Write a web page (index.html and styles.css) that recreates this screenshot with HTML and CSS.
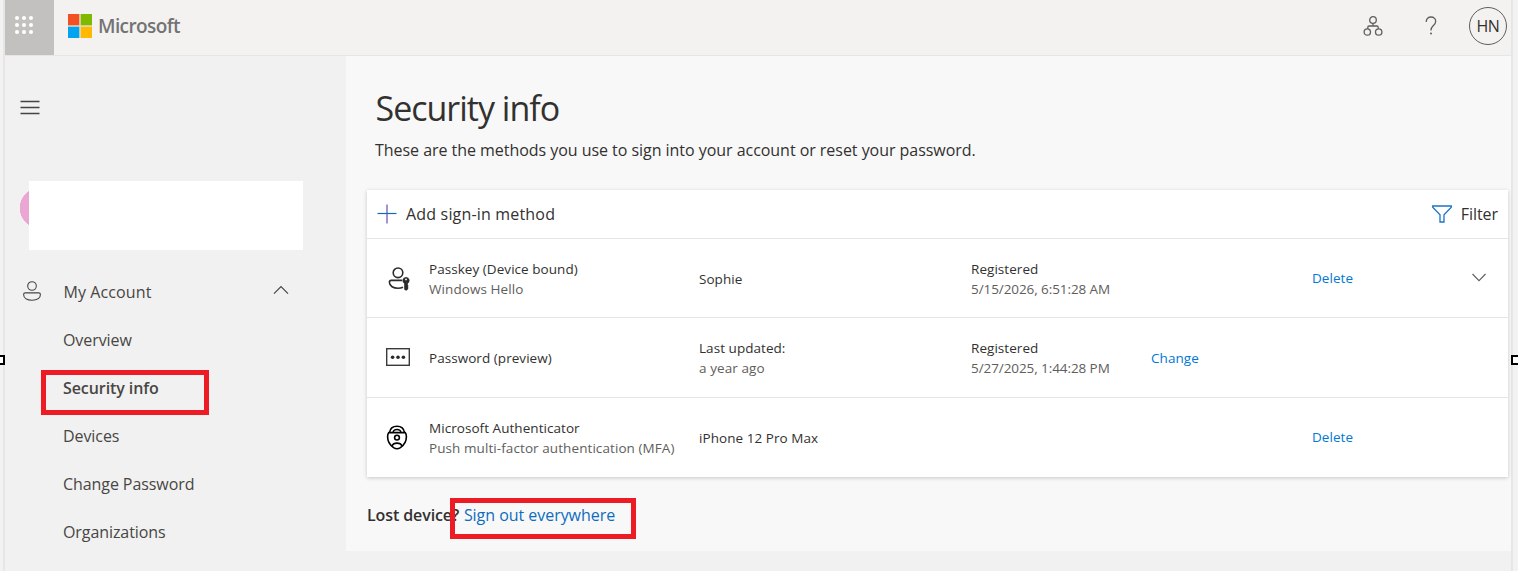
FILE: index.html
```html
<!DOCTYPE html>
<html lang="en">
<head>
    <meta charset="UTF-8">
    <meta name="viewport" content="width=device-width, initial-scale=1.0">
    <title>Security info</title>
    <link rel="stylesheet" href="styles.css">
</head>
<body>
    <div class="page">
        <header class="header">
            <button class="waffle" aria-label="App launcher">
                <svg width="20" height="20" viewBox="0 0 20 20" fill="#fff">
                    <circle cx="3" cy="3" r="2"/><circle cx="10" cy="3" r="2"/><circle cx="17" cy="3" r="2"/>
                    <circle cx="3" cy="10" r="2"/><circle cx="10" cy="10" r="2"/><circle cx="17" cy="10" r="2"/>
                    <circle cx="3" cy="17" r="2"/><circle cx="10" cy="17" r="2"/><circle cx="17" cy="17" r="2"/>
                </svg>
            </button>
            <svg class="logo" width="24" height="24" viewBox="0 0 24 24">
                <rect width="24" height="24" fill="#e4e0d0"/>
                <rect width="11.3" height="11.3" fill="#f25022"/>
                <rect x="12.7" width="11.3" height="11.3" fill="#7fba00"/>
                <rect y="12.7" width="11.3" height="11.3" fill="#00a4ef"/>
                <rect x="12.7" y="12.7" width="11.3" height="11.3" fill="#ffb900"/>
            </svg>
            <span class="brand">Microsoft</span>
            <div class="header-actions">
                <svg width="20" height="20" viewBox="0 0 20 20" fill="none" stroke="#605e5c" stroke-width="1.3">
                    <circle cx="10" cy="4" r="3.3"/>
                    <circle cx="4.3" cy="16" r="3.2"/>
                    <circle cx="15.7" cy="16" r="3.2"/>
                    <path d="M10 7.3v2.7M4.8 12.8v-1.5q0-1.3 1.3-1.3h7.8q1.3 0 1.3 1.3v1.5"/>
                </svg>
                <svg class="help" width="12" height="20" viewBox="0 0 12 20" fill="none" stroke="#605e5c" stroke-width="1.3">
                    <path d="M1.3 6V5.3C1.3 2.6 3.3 1 6 1s4.7 1.6 4.7 4.2c0 2.3-1.3 3.4-2.6 4.6C6.9 10.9 6 11.900 6 14.500"/>
                    <circle cx="6" cy="17.6" r="1" fill="#605e5c" stroke="none"/>
                </svg>
                <span class="initials">HN</span>
            </div>
        </header>

        <div class="layout">
            <nav class="sidebar">
                <svg class="menu-icon" width="20" height="16" viewBox="0 0 20 16" stroke="#444" stroke-width="1.5">
                    <path d="M.5 1.5h19M.5 7.5h19M.5 13.5h19"/>
                </svg>
                <div class="profile">
                    <div class="avatar"></div>
                    <div class="profile-card"></div>
                </div>
                <div class="nav-group">
                    <svg width="18" height="20" viewBox="0 0 18 20" fill="none" stroke="#484644" stroke-width="1.1">
                        <circle cx="9" cy="5" r="4.3"/>
                        <path d="M2.2 11.9h13.6q1.6 0 1.6 1.7c0 3.6-3.6 5.6-8.4 5.6s-8.4-2-8.4-5.6q0-1.7 1.6-1.7z"/>
                    </svg>
                    <span class="nav-title">My Account</span>
                    <svg class="chevron" width="16" height="10" viewBox="0 0 16 10" fill="none" stroke="#484644" stroke-width="1.2">
                        <path d="M1 8.7L8 1.5l7 7.2"/>
                    </svg>
                </div>
                <ul class="nav-list">
                    <li>Overview</li>
                    <li class="active">Security info</li>
                    <li>Devices</li>
                    <li>Change Password</li>
                    <li>Organizations</li>
                </ul>
            </nav>

            <main class="content">
                <h1>Security info</h1>
                <p class="intro">These are the methods you use to sign into your account or reset your password.</p>

                <section class="card">
                    <div class="toolbar">
                        <svg width="20" height="20" viewBox="0 0 20 20" fill="none" stroke-width="1.2">
                            <path d="M10 .5v19" stroke="#8c78c8" stroke-width="1.6"/>
                            <path d="M.5 9.5h19" stroke="#0f6cbd"/>
                        </svg>
                        <span class="add">Add sign-in method</span>
                        <svg class="filter-icon" width="20" height="18" viewBox="0 0 20 18" fill="none" stroke="#1b74c5" stroke-width="1.3">
                            <path d="M.7 1h18.6v1.3L12 9.8V17H8V9.8L.7 2.3z"/>
                        </svg>
                        <span class="filter">Filter</span>
                    </div>

                    <div class="row passkey-row">
                        <svg class="row-icon" width="24" height="24" viewBox="0 0 24 24" fill="none" stroke="#2b2b2b" stroke-width="1.6">
                            <circle cx="12" cy="5.8" r="4.8"/>
                            <path d="M16 13.4H5.2q-1.8 0-1.8 1.8c0 4 4.200 6 8.600 6 2 0 3.600-.3 5-.9"/>
                            <path fill="#2b2b2b" stroke="none" fill-rule="evenodd" d="M20 10a3.500 3.500 0 0 1 1.800 6.500v1.500l.8 1-.8 1 .8 1-.8 1v.5L20.200 23.700 18.200 22.500v-6A3.500 3.500 0 0 1 20 10zm0 1.500a.9.900 0 1 0 0 1.800.9.900 0 0 0 0-1.800z"/>
                        </svg>
                        <div>
                            <div>Passkey (Device bound)</div>
                            <div class="sub">Windows Hello</div>
                        </div>
                        <div>Sophie</div>
                        <div>
                            <div>Registered</div>
                            <div class="sub date">5/15/2026, 6:51:28 AM</div>
                        </div>
                        <div></div>
                        <a class="link">Delete</a>
                        <svg class="expand" width="14" height="9" viewBox="0 0 14 9" fill="none" stroke="#605e5c" stroke-width="1.1">
                            <path d="M.5 1L7 7.7 13.5 1"/>
                        </svg>
                    </div>

                    <div class="row password-row">
                        <svg class="row-icon" width="24" height="18" viewBox="0 0 24 18">
                            <rect x=".7" y=".7" width="22.6" height="16.6" fill="none" stroke="#3b3a39" stroke-width="1.4"/>
                            <g fill="#2b2b2b">
                                <circle cx="6.6" cy="9.3" r="1.8"/><circle cx="12" cy="9.3" r="1.8"/><circle cx="17.4" cy="9.3" r="1.8"/>
                            </g>
                        </svg>
                        <div>Password (preview)</div>
                        <div>
                            <div>Last updated:</div>
                            <div class="sub">a year ago</div>
                        </div>
                        <div>
                            <div>Registered</div>
                            <div class="sub date">5/27/2025, 1:44:28 PM</div>
                        </div>
                        <a class="link">Change</a>
                    </div>

                    <div class="row">
                        <svg class="row-icon" width="22" height="25" viewBox="0 0 22 25" fill="none" stroke="#000" stroke-width="1.6">
                            <path d="M3.500 7.600C4 3.700 7 1.200 11 1.200s7 2.500 7.500 6.400"/>
                            <path d="M7 7.600C7.300 5.500 8.800 4.500 11 4.500s3.700 1 4 3.100" stroke-width="1.4"/>
                            <path d="M2.800 7.600h16.400q1.200 1.400 1.200 4.200c0 5-3 8.800-6 10.900q-3.400 2.200-6.800 0c-3-2.100-6-5.900-6-10.900q0-2.800 1.200-4.200z"/>
                            <circle cx="11" cy="12.600" r="2.400"/>
                            <path d="M5.800 21c1-2 2.800-2.900 5.200-2.900s4.200.9 5.200 2.900"/>
                        </svg>
                        <div>
                            <div>Microsoft Authenticator</div>
                            <div class="sub">Push multi-factor authentication (MFA)</div>
                        </div>
                        <div>iPhone 12 Pro Max</div>
                        <div></div>
                        <div></div>
                        <a class="link">Delete</a>
                    </div>
                </section>

                <p class="lost"><strong>Lost device?</strong> <a>Sign out everywhere</a></p>
            </main>
        </div>
    </div>

    <div class="mark mark-nav"></div>
    <div class="mark mark-signout"></div>
    <div class="handle handle-left"></div>
    <div class="handle handle-right"></div>
</body>
</html>
```

FILE: styles.css
```css
* {
    box-sizing: border-box;
}

body {
    margin: 0;
    height: 571px;
    padding: 0 5px 0 3px;
    background: #f2f2f2;
    color: #323130;
    font-family: "Open Sans", "Noto Sans", sans-serif;
    font-size: 16px;
    letter-spacing: -0.04px;
    overflow: hidden;
}

svg {
    display: block;
    flex-shrink: 0;
}

.page {
    height: 571px;
    border-left: 2px solid #e6e6e6;
    border-right: 2px solid #e6e6e6;
    background: #f1f1f1;
}

.header {
    display: flex;
    align-items: center;
    height: 56px;
    padding-bottom: 3px;
    background: #f3f2f1;
    border-bottom: 1px solid #e6e6e6;
}

.waffle {
    display: flex;
    align-items: flex-start;
    align-self: flex-start;
    width: 49px;
    height: 55px;
    padding: 15px 0 0 9px;
    margin-right: 14px;
    border: none;
    background: #c2c1bf;
    flex-shrink: 0;
}

.brand {
    margin-left: 6px;
    color: #737373;
    font-size: 19px;
    font-weight: 600;
    letter-spacing: -0.6px;
}

.header-actions {
    display: flex;
    align-items: center;
    margin-left: auto;
    padding-right: 4px;
}

.help {
    margin: 0 32px 0 42px;
}

.initials {
    width: 38px;
    height: 38px;
    border: 1px solid #605e5c;
    border-radius: 50%;
    text-align: center;
    line-height: 37px;
    letter-spacing: -0.3px;
}

.layout {
    display: flex;
}

.sidebar {
    width: 341px;
    padding: 44px 0 0 15px;
    flex-shrink: 0;
    color: #484644;
}

.profile {
    display: flex;
    align-items: center;
    height: 69px;
    margin-top: 65px;
}

.avatar {
    width: 9px;
    height: 40px;
    margin-bottom: 15px;
    background: radial-gradient(circle at 20px 20px, #eca6d3 20px, transparent 20.5px);
}

.profile-card {
    width: 274px;
    height: 69px;
    background: #fff;
}

.nav-group {
    display: flex;
    align-items: center;
    height: 48px;
    margin-top: 17px;
    padding-left: 3px;
}

.nav-title {
    margin-left: 22.5px;
    padding-top: 2px;
    letter-spacing: 0.1px;
}

.nav-group .chevron {
    margin: 0 57px 2px auto;
}

.nav-list {
    margin: 0;
    padding: 0 0 0 43px;
    list-style: none;
}

.nav-list li {
    height: 48px;
    line-height: 50px;
    letter-spacing: -0.08px;
}

.nav-list .active {
    font-weight: 600;
}

.content {
    flex: 1;
    height: 495px;
    padding: 28px 3px 0 21px;
    background: #f8f8f8;
}

h1 {
    margin: 0 0 0 8.5px;
    font-size: 34px;
    font-weight: 400;
    line-height: 48px;
    letter-spacing: -1px;
}

.intro {
    margin: 6px 0 0 8px;
    line-height: 24px;
}

.card {
    height: 287px;
    margin-top: 28px;
    background: #fff;
    box-shadow: 0 1px 4px rgba(0, 0, 0, 0.2);
}

.toolbar {
    display: flex;
    align-items: center;
    height: 49px;
    padding: 0 10px;
    border-bottom: 1px solid #e6e6e6;
}

.add {
    margin-left: 9px;
    letter-spacing: 0.18px;
}

.filter-icon {
    margin-left: auto;
}

.filter {
    margin-left: 9px;
}

.row {
    display: grid;
    grid-template-columns: 62px 270px 272px 180px 161px 1fr 36px;
    align-items: center;
    height: 79px;
    border-bottom: 1px solid #e6e6e6;
    font-size: 13.5px;
    line-height: 20px;
    letter-spacing: 0.05px;
}

.passkey-row {
    padding-top: 1px;
}

.passkey-row .link,
.passkey-row .expand,
.row:last-child .link {
    margin-bottom: 2px;
}

.password-row {
    height: 80px;
}

.password-row .row-icon {
    margin-bottom: 2px;
}

.row:last-child {
    border-bottom: none;
}

.row-icon {
    margin-left: 19px;
}

.passkey-row .row-icon {
    margin-left: 18.5px;
}

.sub {
    color: #605e5c;
}

.row .sub {
    letter-spacing: 0.08px;
}

.row .date {
    letter-spacing: -0.08px;
}

.link,
.lost a {
    color: #0f6cbd;
}

.link {
    color: #0078d4;
    letter-spacing: 0.05px;
}

.lost {
    margin: 26px 0 0;
    line-height: 24px;
}

.lost strong {
    font-weight: 600;
    letter-spacing: -0.1px;
}

.lost a {
    margin-left: 0.6px;
}

/* red highlight boxes over the page */
.mark {
    position: absolute;
    border: 5px solid #ed1c24;
}

.mark-nav {
    left: 41px;
    top: 370px;
    width: 168px;
    height: 45px;
}

.mark-signout {
    left: 450px;
    top: 498px;
    width: 186px;
    height: 41px;
}

.handle {
    position: absolute;
    top: 355px;
    height: 10px;
    border: 2px solid #000;
    background: #fff;
}

.handle-left {
    left: 0;
    width: 5px;
    border-left: none;
}

.handle-right {
    left: 1511px;
    width: 7px;
    border-right: none;
}
```
